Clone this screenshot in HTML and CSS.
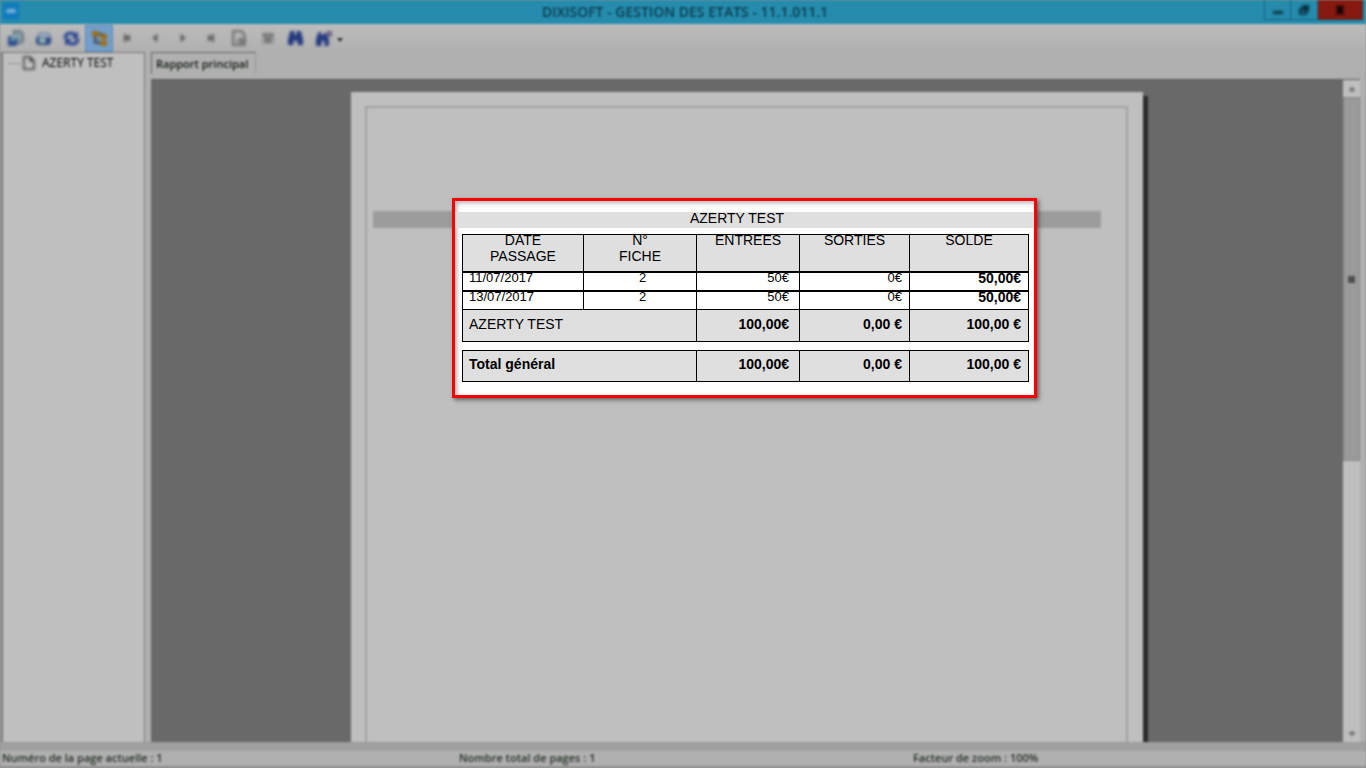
FILE: index.html
```
<!DOCTYPE html>
<html lang="fr">
<head>
  <meta charset="UTF-8">
  <meta name="viewport" content="width=device-width, initial-scale=1.0">
  <title>DIXISOFT - GESTION DES ETATS</title>
  <link rel="stylesheet" href="styles.css">
</head>
<body>
  <div class="window">
    <header class="titlebar">
      <svg class="app-icon" viewBox="0 0 16 16"><rect width="16" height="16" rx="2" fill="#0c78bd"/><path d="M3 10c0-4 3-6 5-3 1-3 5-2 5 3z" fill="#7fb4d6"/></svg>
      <h1>DIXISOFT - GESTION DES ETATS - 11.1.011.1</h1>
      <div class="window-buttons">
        <button aria-label="Réduire"><svg viewBox="0 0 12 12"><path d="M1 7h10v3H1z"/></svg></button>
        <button aria-label="Restaurer"><svg viewBox="0 0 12 12"><path d="M4 1h7v7H9v3H1V4h3zM3 7v2h4V7z" fill-rule="evenodd"/></svg></button>
        <button class="close" aria-label="Fermer"><svg viewBox="0 0 12 12"><path d="M3 2l6 8M9 2l-6 8" stroke="#000" stroke-width="3"/></svg></button>
      </div>
    </header>

    <nav class="toolbar">
      <button aria-label="Exporter"><svg viewBox="0 0 16 16"><path d="M6 1h7l2 3v7l-5 2z" fill="#8b9ba6" stroke="#34495a"/><path d="M1 6h8v9H1z" fill="#284a8a"/><path d="M3 9l5-5 2 2-5 5z" fill="#7caeb5"/></svg></button>
      <button aria-label="Imprimer"><svg viewBox="0 0 16 16"><path d="M4 3h9l2 5H2z" fill="#a3b2c2" stroke="#526b91"/><path d="M1 7h14v5l-2 2H3l-2-2z" fill="#29487f"/><path d="M4 8h6v4H4z" fill="#a9c1c0"/></svg></button>
      <button aria-label="Actualiser"><svg viewBox="0 0 16 16"><path d="M2 8c0-5 6-7 10-3M14 8c0 5-6 7-10 3" fill="none" stroke="#233f91" stroke-width="3"/><path d="M14 1v7H8zM2 15V8h6z" fill="#233f91"/></svg></button>
      <button class="active" aria-label="Arborescence"><svg viewBox="0 0 16 16"><path d="M4 5v7h7M5 4h7" fill="none" stroke="#3c3d3d" stroke-width="2"/><path d="M1 1h6v5H1zM9 4h6v5H9zM9 10h6v5H9z" fill="#a06d0d"/></svg></button>
      <button class="step" aria-label="Première page" disabled><svg viewBox="0 0 16 16"><path d="M4 3h3v10H4zM12 3v10L6 8z"/></svg></button>
      <button class="step" aria-label="Page précédente" disabled><svg viewBox="0 0 16 16"><path d="M11 2v12L5 8z"/></svg></button>
      <button class="step" aria-label="Page suivante" disabled><svg viewBox="0 0 16 16"><path d="M5 2v12l6-6z"/></svg></button>
      <button class="step" aria-label="Dernière page" disabled><svg viewBox="0 0 16 16"><path d="M4 3v10l6-5zM9 3h3v10H9z"/></svg></button>
      <button aria-label="Atteindre la page" disabled><svg viewBox="0 0 16 16"><path d="M2 1h8l3 4v9H2zM5 10h6l-2-3M11 10l-2 3" fill="none" stroke="#6f6f6f" stroke-width="2"/></svg></button>
      <button aria-label="Fermer la vue" disabled><svg viewBox="0 0 16 16"><path d="M3 3h11v10H3z" fill="#959595"/><path d="M3 4h11M5 6l6 6M12 6l-6 6" stroke="#707070" stroke-width="2"/></svg></button>
      <button aria-label="Rechercher"><svg viewBox="0 0 16 16"><path d="M3 1h4v4h2V1h4l2 8v5h-5v-4H6v4H1V9z" fill="#1f377d"/></svg></button>
      <button aria-label="Zoom"><svg viewBox="0 0 16 16"><path d="M3 2h3v3h2V3h3l2 6v6H9v-5H6v5H1V9z" fill="#1f377d"/><path d="M11 1h5v5h-4z" fill="#705d82"/></svg></button>
      <span class="caret"></span>
    </nav>

    <main class="workspace">
      <aside class="tree">
        <span class="branch"></span>
        <svg viewBox="0 0 12 14"><path d="M1 1h6l4 4v8H1zM7 1v4h4" fill="#c8c8c8" stroke="#333" stroke-width="1.5"/></svg>
        <span>AZERTY TEST</span>
      </aside>

      <section class="report">
        <div class="tabs"><button class="tab">Rapport principal</button></div>
        <div class="viewer">
          <div class="canvas">
            <div class="paper">
              <div class="margin-frame">
                <div class="group-band"></div>
              </div>
            </div>
          </div>
          <div class="scrollbar">
            <button aria-label="Haut"><svg viewBox="0 0 8 8"><path d="M1 6l3-4 3 4z"/></svg></button>
            <div class="track"><div class="thumb"><span class="grip"></span></div></div>
            <button aria-label="Bas"><svg viewBox="0 0 8 8"><path d="M1 2l3 4 3-4z"/></svg></button>
          </div>
        </div>
      </section>
    </main>

    <footer class="statusbar">
      <span>Numéro de la page actuelle : 1</span>
      <span>Nombre total de pages : 1</span>
      <span>Facteur de zoom : 100%</span>
    </footer>
  </div>

  <section class="callout">
    <h2>AZERTY TEST</h2>
    <table class="ledger">
      <colgroup><col class="col-date"><col class="col-fiche"><col class="col-in"><col class="col-out"><col class="col-balance"></colgroup>
      <thead>
        <tr>
          <th><span>DATE</span> <span>PASSAGE</span></th>
          <th><span>N°</span> <span>FICHE</span></th>
          <th><span>ENTREES</span></th>
          <th><span>SORTIES</span></th>
          <th><span>SOLDE</span></th>
        </tr>
      </thead>
      <tbody>
        <tr>
          <td>11/07/2017</td>
          <td class="center">2</td>
          <td class="amount">50€</td>
          <td class="amount">0€</td>
          <td class="amount balance">50,00€</td>
        </tr>
        <tr>
          <td>13/07/2017</td>
          <td class="center">2</td>
          <td class="amount">50€</td>
          <td class="amount">0€</td>
          <td class="amount balance">50,00€</td>
        </tr>
      </tbody>
      <tfoot>
        <tr>
          <td class="label" colspan="2">AZERTY TEST</td>
          <td class="amount">100,00€</td>
          <td class="amount">0,00 €</td>
          <td class="amount">100,00 €</td>
        </tr>
      </tfoot>
    </table>
    <table class="ledger">
      <colgroup><col class="col-date"><col class="col-fiche"><col class="col-in"><col class="col-out"><col class="col-balance"></colgroup>
      <tfoot>
        <tr>
          <td colspan="2">Total général</td>
          <td class="amount">100,00€</td>
          <td class="amount">0,00 €</td>
          <td class="amount">100,00 €</td>
        </tr>
      </tfoot>
    </table>
  </section>
</body>
</html>
```
FILE: styles.css
```
* {
  box-sizing: border-box;
}
body {
  margin: 0;
  height: 100vh;
  overflow: hidden;
  position: relative;
  background-color: #909090;
  font-family: "Open Sans", "Noto Sans", sans-serif;
  font-size: 12px;
  color: #000;
}
button {
  padding: 0;
  border: none;
  background: none;
  font: inherit;
  color: inherit;
}
h1, h2 {
  margin: 0;
}

/* application window, out of focus behind the callout */
.window {
  height: 100%;
  display: flex;
  flex-direction: column;
  background-color: #b0b0b0;
  filter: blur(1px);
}
.titlebar {
  height: 24px;
  display: flex;
  align-items: flex-start;
  padding: 0 3px;
  background-color: #258cae;
}
.app-icon {
  width: 16px;
  height: 16px;
  margin-top: 3px;
}
.titlebar h1 {
  flex: 1;
  padding-left: 87px;
  text-align: center;
  font-size: 14px;
  font-weight: 600;
  line-height: 23px;
  color: #0a3c4d;
}
.window-buttons {
  display: flex;
}
.window-buttons button {
  width: 27px;
  height: 20px;
  display: flex;
  align-items: center;
  justify-content: center;
  border: 1px solid #1a627a;
  border-top: none;
  border-left: none;
}
.window-buttons button:first-child {
  border-left: 1px solid #1a627a;
}
.window-buttons .close {
  width: 45px;
  background-color: #861910;
  border-color: #5a2a2a;
}
.window-buttons svg {
  width: 12px;
  height: 12px;
  fill: #08303d;
}
.window svg {
  filter: blur(1px);
}

.toolbar {
  height: 28px;
  display: flex;
  align-items: center;
  padding-left: 1px;
  background: linear-gradient(#bcbcbc, #b0b0b0);
}
.toolbar button {
  width: 28px;
  height: 27px;
  display: flex;
  align-items: center;
  justify-content: center;
}
.toolbar .active {
  background-color: #739fcc;
  border: 1px solid #5b87b8;
}
.toolbar svg {
  width: 17px;
  height: 17px;
}
.toolbar .step svg {
  width: 12px;
  height: 12px;
  fill: #555;
}
.caret {
  border: 3px solid transparent;
  border-top: 4px solid #333;
  margin-top: 3px;
  border-bottom: none;
}

.workspace {
  flex: 1;
  min-height: 0;
  display: flex;
  gap: 6px;
  padding: 0 6px 0 1px;
}
.tree {
  width: 144px;
  height: calc(100% + 4px);
  display: flex;
  align-items: flex-start;
  padding: 3px 6px;
  background-color: #bfbfbf;
  border: 1px solid #777;
  border-left-width: 2px;
  line-height: 14px;
  color: #000;
}
.tree svg {
  width: 12px;
  height: 14px;
  margin-right: 7px;
}
.branch {
  width: 12px;
  margin: 7px 2px 0 0;
  border-top: 1px dotted #777;
}
.report {
  flex: 1;
  display: flex;
  flex-direction: column;
}
.tabs {
  height: 27px;
}
.tab {
  height: 22px;
  padding: 0 7px 0 4px;
  border: 1px solid #666;
  border-right-color: #999;
  border-bottom: none;
  font-weight: 600;
  font-size: 11px;
  color: #101a10;
}
.viewer {
  flex: 1;
  min-height: 0;
  display: flex;
  background-color: #696969;
  border-top: 1px solid #5a5a5a;
}
.canvas {
  flex: 1;
  display: flex;
  justify-content: center;
  padding-top: 12px;
  overflow: hidden;
}
.paper {
  width: 792px;
  padding: 14px 15px 0 14px;
  background-color: #bfbfbf;
  box-shadow: 5px 4px 0 #2c2c2c;
}
.margin-frame {
  height: 100%;
  border: 2px solid #a2a2a2;
  border-bottom: none;
  padding: 103px 25px 0 6px;
}
.group-band {
  height: 17px;
  background-color: #9c9c9c;
}
.scrollbar {
  width: 17px;
  display: flex;
  flex-direction: column;
  background-color: #bfbfbf;
}
.scrollbar button {
  height: 17px;
}
.scrollbar svg {
  width: 8px;
  height: 8px;
  fill: #444;
}
.track {
  flex: 1;
}
.thumb {
  height: 58%;
  display: flex;
  align-items: center;
  justify-content: center;
  background-color: #9a9a9a;
  border: 1px solid #888;
}
.grip {
  width: 7px;
  height: 7px;
  background-color: #505050;
}

.statusbar {
  height: 26px;
  display: grid;
  grid-template-columns: 457fr 454fr 455fr;
  padding-top: 7px;
  border-top: 1px solid #999;
  border-bottom: 2px solid #909090;
  background: linear-gradient(#a0a0a0 8px, #b0b0b0 8px);
  line-height: 16px;
  font-size: 11px;
  font-weight: 600;
  color: #263026;
}
.statusbar span {
  padding-left: 2px;
}

/* focused part of the report */
.callout {
  position: absolute;
  top: 198px;
  left: 452px;
  width: 585px;
  padding-bottom: 13px;
  background-color: #fff;
  border: 3px solid #f00;
  box-shadow: 2px 2px 4px rgba(0, 0, 0, 0.5), inset 2px 2px 4px rgba(0, 0, 0, 0.3);
  font-family: "Liberation Sans", Arial, sans-serif;
  font-size: 14px;
  line-height: 16px;
}
.callout h2 {
  margin: 11px 0 6px;
  padding: 0 15px 4px 0;
  background-color: #dfdfdf;
  text-align: center;
  font-size: 14px;
  font-weight: 400;
  line-height: 12px;
}
.ledger {
  width: 567px;
  margin: 0 0 8px 7px;
  table-layout: fixed;
  border-collapse: collapse;
}
.ledger:last-child {
  margin-bottom: 0;
}
.col-date {
  width: 121px;
}
.col-fiche {
  width: 113px;
}
.col-in {
  width: 103px;
}
.col-out {
  width: 110px;
}
.col-balance {
  width: 119px;
}
.ledger th, .ledger td {
  border: 1px solid #000;
  padding: 0 7px 0 6px;
  text-align: left;
}
.ledger th {
  height: 37px;
  padding: 0;
  background-color: #dfdfdf;
  text-align: center;
  vertical-align: top;
  font-weight: 400;
}
.ledger th span {
  display: block;
  margin-bottom: 6px;
  line-height: 10px;
}
.ledger tbody td {
  height: 19px;
  border-top-width: 2px;
  vertical-align: top;
  font-size: 13px;
  line-height: 10px;
}
.ledger tfoot td {
  height: 32px;
  padding-bottom: 4px;
  background-color: #dfdfdf;
  font-weight: 700;
}
.ledger:last-child tfoot td {
  height: 31px;
}
.ledger .label {
  font-weight: 400;
}
.ledger tbody .center {
  padding-left: 12px;
  text-align: center;
}
.ledger .amount {
  text-align: right;
}
.ledger .amount:nth-last-child(3) {
  padding-right: 10px;
}
.ledger tbody .balance {
  font-size: 14px;
  font-weight: 700;
}
```
